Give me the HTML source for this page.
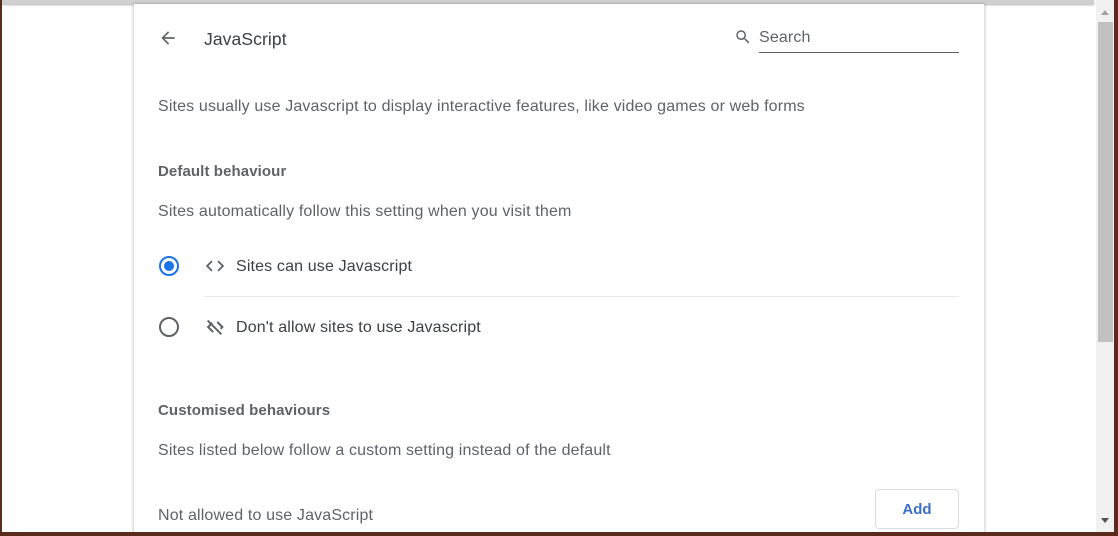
<!DOCTYPE html>
<html><head><style>
*{margin:0;padding:0;box-sizing:border-box}
html,body{width:1118px;height:536px;overflow:hidden}
body{background:#5a2a1c;font-family:"Liberation Sans",Arial,sans-serif;position:relative}
.win{position:absolute;left:2px;top:0;width:1112px;height:532px;background:#fff;overflow:hidden}
.topbar{position:absolute;left:0;top:0;width:1092px;height:4px;background:#d0d0d0;box-shadow:0 1px 2px rgba(0,0,0,.3)}
.card{position:absolute;left:132px;top:4px;width:850px;height:540px;background:#fff;box-shadow:0 0 3px rgba(60,64,67,.3),0 1px 4px rgba(60,64,67,.15)}
.t{position:absolute;color:#5f6368;font-size:16px;letter-spacing:0.15px;white-space:nowrap}
.b{font-weight:bold;color:#5f6368;font-size:15px;letter-spacing:0.1px}
.sb{position:absolute;left:1094px;top:0;width:18px;height:532px;background:#f1f1f1}
.thumb{position:absolute;left:2px;top:22px;width:15px;height:320px;background:#c1c1c1}
</style></head><body>
<div class="win">
<div class="topbar"></div>
<div class="card">
<svg style="position:absolute;left:24px;top:24px" width="20" height="20" viewBox="0 0 24 24"><path d="M20 11H7.83l5.59-5.59L12 4l-8 8 8 8 1.41-1.41L7.83 13H20v-2z" fill="#5f6368"/></svg>
<div class="t" style="left:70px;top:25px;font-size:17.5px;color:#3c4043;letter-spacing:0.1px">JavaScript</div>
<svg style="position:absolute;left:600px;top:24px" width="18" height="18" viewBox="0 0 24 24"><path d="M15.5 14h-.79l-.28-.27A6.47 6.47 0 0 0 16 9.5 6.5 6.5 0 1 0 9.5 16c1.61 0 3.09-.59 4.23-1.57l.27.28v.79l5 4.99L20.49 19l-4.99-5zm-6 0C7.01 14 5 11.99 5 9.5S7.01 5 9.5 5 14 7.01 14 9.5 11.99 14 9.5 14z" fill="#5f6368"/></svg>
<div class="t" style="left:625px;top:25px">Search</div>
<div style="position:absolute;left:625px;top:48px;width:200px;height:1px;background:#5f6368"></div>
<div class="t" style="left:24px;top:94px">Sites usually use Javascript to display interactive features, like video games or web forms</div>
<div class="t b" style="left:24px;top:159px">Default behaviour</div>
<div class="t" style="left:24px;top:199px">Sites automatically follow this setting when you visit them</div>
<div style="position:absolute;left:25px;top:252px;width:20px;height:20px;border:2px solid #1a73e8;border-radius:50%"><div style="position:absolute;left:3px;top:3px;width:10px;height:10px;border-radius:50%;background:#1a73e8"></div></div>
<svg style="position:absolute;left:70px;top:251px" width="22" height="22" viewBox="0 0 24 24"><path d="M9.4 16.6L4.8 12l4.6-4.6L8 6l-6 6 6 6 1.4-1.4zm5.2 0l4.6-4.6-4.6-4.6L16 6l6 6-6 6-1.4-1.4z" fill="#5f6368"/></svg>
<div class="t" style="left:102px;top:254px;color:#3c4043">Sites can use Javascript</div>
<div style="position:absolute;left:70px;top:292px;width:755px;height:1px;background:#e8eaed"></div>
<div style="position:absolute;left:25px;top:313px;width:20px;height:20px;border:2px solid #5f6368;border-radius:50%"></div>
<svg style="position:absolute;left:70px;top:312px" width="22" height="22" viewBox="0 0 24 24"><path d="M4 5l15 15" stroke="#5f6368" stroke-width="2.2"/><path d="M9 7.5L4.5 12 10 17.5M14.5 6.5L20 12l-2 2" stroke="#5f6368" stroke-width="2.2" fill="none"/></svg>
<div class="t" style="left:102px;top:315px;color:#3c4043">Don't allow sites to use Javascript</div>
<div class="t b" style="left:24px;top:398px">Customised behaviours</div>
<div class="t" style="left:24px;top:438px">Sites listed below follow a custom setting instead of the default</div>
<div class="t" style="left:24px;top:503px">Not allowed to use JavaScript</div>
<div style="position:absolute;left:741px;top:485px;width:84px;height:40px;border:1px solid #dadce0;border-radius:4px;color:#3a6fc4;font-weight:bold;font-size:15px;text-align:center;line-height:40px">Add</div>
</div>
<div class="sb"><div class="thumb"></div>
<div style="position:absolute;left:5px;top:10px;border:4px solid transparent;border-bottom:5px solid #a3a3a3;border-top:0"></div>
<div style="position:absolute;left:5px;top:518px;border:4px solid transparent;border-top:5px solid #505050;border-bottom:0"></div>
</div>
</div>
</body></html>
